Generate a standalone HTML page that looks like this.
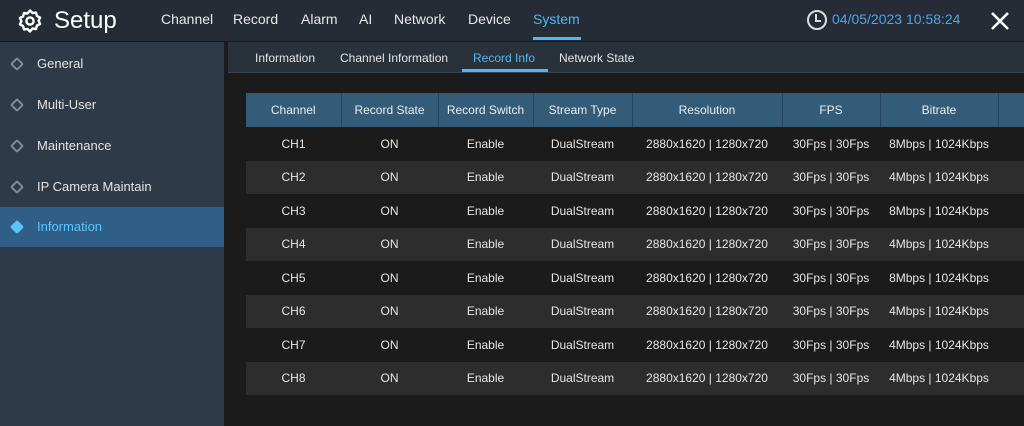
<!DOCTYPE html>
<html><head><meta charset="utf-8"><style>
*{margin:0;padding:0;box-sizing:border-box}
body{width:1024px;height:426px;overflow:hidden;background:#1b1b1c;font-family:"Liberation Sans",sans-serif;color:#e6e6e6;position:relative}
.top{position:absolute;left:0;top:0;width:1024px;height:42px;background:#252c36;border-bottom:1px solid #151a20}
.nav{position:absolute;top:11px;font-size:14px;color:#e8e8e8}
.side{position:absolute;left:0;top:42px;width:224px;height:384px;background:#2e3a48}
.si{position:absolute;left:0;width:224px;height:40px;font-size:13px;line-height:40px;padding-left:37px;color:#e4e4e4}
.si .ic{position:absolute;left:12px;top:15px;width:10px;height:10px;transform:rotate(45deg);border-radius:2px;border:2px solid #7f8a96}
.si.sel{background:#2f5f86;color:#5cc4ff}
.si.sel .ic{border-color:#5cc4ff;background:#5cc4ff}
.sub{position:absolute;left:228px;top:42px;width:796px;height:31px;background:#29323b;border-bottom:1px solid #3a4550}
.st{position:absolute;top:9px;font-size:12px;color:#e4e4e4}
table{position:absolute;left:246px;top:93px;border-collapse:collapse;font-size:12px;table-layout:fixed;width:782px}
td,th{text-align:center;font-weight:normal;height:33.5px;padding:0;white-space:nowrap}
th{background:#345b77;height:34px;border-right:1px solid #25465e;color:#e8eef4}
tr:nth-child(odd) td{background:#2d2d2d}
</style></head><body>
<div class="top">
<svg style="position:absolute;left:17px;top:8px" width="26" height="26" viewBox="0 0 26 26"><path d="M13 2.5l2.5 2.6 3.5-.5.9 3.4 3.2 1.6-1.5 3.2 1.5 3.2-3.2 1.6-.9 3.4-3.5-.5L13 23.5l-2.5-2.6-3.5.5-.9-3.4-3.2-1.6 1.5-3.2-1.5-3.2 3.2-1.6.9-3.4 3.5.5z" fill="none" stroke="#fff" stroke-width="2.4" stroke-linejoin="round"/><circle cx="13" cy="13" r="3.6" fill="none" stroke="#fff" stroke-width="2.4"/></svg>
<div style="position:absolute;left:54px;top:7px;font-size:24px;color:#fff">Setup</div>
<div class="nav" style="left:161px">Channel</div>
<div class="nav" style="left:233px">Record</div>
<div class="nav" style="left:301px">Alarm</div>
<div class="nav" style="left:359px">AI</div>
<div class="nav" style="left:394px">Network</div>
<div class="nav" style="left:468px">Device</div>
<div class="nav" style="left:533px;color:#4fb8f5">System</div>
<div style="position:absolute;left:533px;top:37px;width:48px;height:3px;background:#4fb8f5"></div>
<svg style="position:absolute;left:806px;top:9px" width="22" height="22" viewBox="0 0 22 22"><circle cx="11" cy="11" r="9" fill="none" stroke="#ddd" stroke-width="2"/><path d="M10 5v7h5" fill="none" stroke="#ddd" stroke-width="2"/></svg>
<div style="position:absolute;left:832px;top:11px;font-size:14px;color:#4aa6e6">04/05/2023 10:58:24</div>
<svg style="position:absolute;left:990px;top:11px" width="20" height="20" viewBox="0 0 20 20"><path d="M2 2L18 18M18 2L2 18" stroke="#fff" stroke-width="2.6"/></svg>
</div>
<div class="side">
<div class="si" style="top:2px"><span class="ic"></span>General</div>
<div class="si" style="top:43px"><span class="ic"></span>Multi-User</div>
<div class="si" style="top:84px"><span class="ic"></span>Maintenance</div>
<div class="si" style="top:125px"><span class="ic"></span>IP Camera Maintain</div>
<div class="si sel" style="top:165px"><span class="ic"></span>Information</div>
</div>
<div class="sub">
<div class="st" style="left:27px">Information</div>
<div class="st" style="left:112px">Channel Information</div>
<div class="st" style="left:245px;color:#4fb8f5">Record Info</div>
<div style="position:absolute;left:234px;top:27px;width:86px;height:3px;background:#4fb8f5"></div>
<div class="st" style="left:331px">Network State</div>
</div>
<table>
<colgroup><col style="width:95px"><col style="width:97px"><col style="width:95px"><col style="width:99px"><col style="width:150px"><col style="width:98px"><col style="width:118px"><col style="width:30px"></colgroup>
<tr><th>Channel</th><th>Record State</th><th>Record Switch</th><th>Stream Type</th><th>Resolution</th><th>FPS</th><th>Bitrate</th><th style="border-right:none"></th></tr>
<tr><td>CH1</td><td>ON</td><td>Enable</td><td>DualStream</td><td>2880x1620 | 1280x720</td><td>30Fps | 30Fps</td><td>8Mbps | 1024Kbps</td><td></td></tr>
<tr><td>CH2</td><td>ON</td><td>Enable</td><td>DualStream</td><td>2880x1620 | 1280x720</td><td>30Fps | 30Fps</td><td>4Mbps | 1024Kbps</td><td></td></tr>
<tr><td>CH3</td><td>ON</td><td>Enable</td><td>DualStream</td><td>2880x1620 | 1280x720</td><td>30Fps | 30Fps</td><td>8Mbps | 1024Kbps</td><td></td></tr>
<tr><td>CH4</td><td>ON</td><td>Enable</td><td>DualStream</td><td>2880x1620 | 1280x720</td><td>30Fps | 30Fps</td><td>4Mbps | 1024Kbps</td><td></td></tr>
<tr><td>CH5</td><td>ON</td><td>Enable</td><td>DualStream</td><td>2880x1620 | 1280x720</td><td>30Fps | 30Fps</td><td>8Mbps | 1024Kbps</td><td></td></tr>
<tr><td>CH6</td><td>ON</td><td>Enable</td><td>DualStream</td><td>2880x1620 | 1280x720</td><td>30Fps | 30Fps</td><td>4Mbps | 1024Kbps</td><td></td></tr>
<tr><td>CH7</td><td>ON</td><td>Enable</td><td>DualStream</td><td>2880x1620 | 1280x720</td><td>30Fps | 30Fps</td><td>4Mbps | 1024Kbps</td><td></td></tr>
<tr><td>CH8</td><td>ON</td><td>Enable</td><td>DualStream</td><td>2880x1620 | 1280x720</td><td>30Fps | 30Fps</td><td>4Mbps | 1024Kbps</td><td></td></tr>
</table>
</body></html>
